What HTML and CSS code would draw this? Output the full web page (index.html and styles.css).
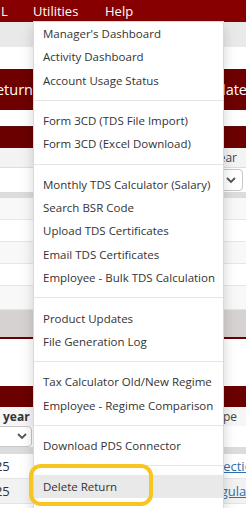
FILE: index.html
```html
<!DOCTYPE html>
<html>
<head>
<meta charset="utf-8">
<link rel="stylesheet" href="styles.css">
</head>
<body>
<div class="page">
  <nav class="topnav">
    <span class="nav-item nav-first">L</span>
    <span class="nav-item nav-util">Utilities</span>
    <span class="nav-item">Help</span>
  </nav>
  <div class="subbar"></div>
  <div class="blank blank-22"></div>
  <div class="banner">
    <span class="banner-left">Return</span>
    <span class="banner-right">Update</span>
  </div>
  <div class="blank blank-16 line-bottom"></div>
  <div class="panel-head"></div>
  <div class="label-row"><span class="label-right">Financial Year</span></div>
  <div class="select-row select-row-right">
    <div class="select select-right">
      <svg class="chev" width="10" height="7" viewBox="0 0 10 7"><polyline points="1,1 5,5 9,1" fill="none" stroke="#555" stroke-width="1.8"/></svg>
    </div>
  </div>
  <div class="band-grey"></div>
  <div class="row row-alt"></div>
  <div class="row"></div>
  <div class="row row-alt"></div>
  <div class="row"></div>
  <div class="row row-alt row-last"></div>
  <div class="band-dark-grey"></div>
  <div class="red-line"></div>
  <div class="blank blank-47"></div>
  <div class="panel-head panel-head-2"></div>
  <div class="head-row">
    <span class="head-left">year</span>
    <span class="head-right">Type</span>
  </div>
  <div class="select-row select-row-left">
    <div class="select select-left">
      <svg class="chev" width="10" height="7" viewBox="0 0 10 7"><polyline points="1,1 5,5 9,1" fill="none" stroke="#555" stroke-width="1.8"/></svg>
    </div>
  </div>
  <div class="band-grey band-grey-2"></div>
  <div class="data-row">
    <span class="cell-year">2024-25</span>
    <span class="cell-type"><a class="type-link">Correction</a></span>
  </div>
  <div class="data-row data-row-alt">
    <span class="cell-year">2024-25</span>
    <span class="cell-type"><a class="type-link">Regular</a></span>
  </div>
  <div class="data-row"></div>

  <ul class="dropdown">
    <li class="dd-item">Manager's Dashboard</li>
    <li class="dd-item">Activity Dashboard</li>
    <li class="dd-item">Account Usage Status</li>
    <li class="dd-divider"></li>
    <li class="dd-item">Form 3CD (TDS File Import)</li>
    <li class="dd-item">Form 3CD (Excel Download)</li>
    <li class="dd-divider"></li>
    <li class="dd-item">Monthly TDS Calculator (Salary)</li>
    <li class="dd-item">Search BSR Code</li>
    <li class="dd-item">Upload TDS Certificates</li>
    <li class="dd-item">Email TDS Certificates</li>
    <li class="dd-item">Employee - Bulk TDS Calculation</li>
    <li class="dd-divider"></li>
    <li class="dd-item">Product Updates</li>
    <li class="dd-item">File Generation Log</li>
    <li class="dd-divider"></li>
    <li class="dd-item">Tax Calculator Old/New Regime</li>
    <li class="dd-item">Employee - Regime Comparison</li>
    <li class="dd-divider"></li>
    <li class="dd-item">Download PDS Connector</li>
    <li class="dd-divider"></li>
    <li class="dd-item dd-hover">Delete Return</li>
  </ul>
  <div class="highlight-ring"></div>
</div>
</body>
</html>
```
FILE: styles.css
```css
* { box-sizing: border-box; }
html, body { margin: 0; padding: 0; }
body {
  width: 246px;
  height: 508px;
  overflow: hidden;
  background: #fff;
  font-family: "Open Sans", "Noto Sans", sans-serif;
  color: #333;
}
.page { position: relative; width: 246px; height: 508px; overflow: hidden; }

.topnav {
  height: 22px;
  background: #870000;
  display: flex;
  align-items: center;
  color: #fff;
  font-size: 13px;
  white-space: nowrap;
}
.nav-item { flex: none; line-height: 22px; }
.nav-first { width: 33px; padding-left: 1px; }
.nav-util { width: 72px; }

.subbar { height: 25px; background: #e9e9e9; }
.blank-22 { height: 22px; }
.blank-16 { height: 17px; }
.blank-47 { height: 47px; }
.line-bottom { border-bottom: 1px solid #5a1010; }

.banner {
  height: 41px;
  background: #6e0000;
  display: flex;
  justify-content: space-between;
  align-items: center;
  color: #fff;
  font-size: 14.5px;
  white-space: nowrap;
}
.banner-left { margin-left: -13px; }
.banner-right { margin-right: -1px; }

.panel-head { height: 21px; background: #6b0000; }
.panel-head-2 { height: 21px; }

.label-row {
  height: 20px;
  background: #f3f3f3;
  border-bottom: 1px solid #dedede;
  display: flex;
  justify-content: flex-end;
  align-items: center;
  font-size: 12px;
  color: #444;
  padding-right: 9px;
}
.select-row { height: 24px; display: flex; align-items: center; }
.select-row-right { justify-content: flex-end; padding-right: 3px; }
.select {
  height: 22px;
  border: 1px solid #c6c6c6;
  border-radius: 4px;
  background: #fff;
  display: flex;
  align-items: center;
  justify-content: flex-end;
}
.select-right { width: 60px; padding-right: 6px; }
.select-left { width: 40px; margin-left: -8px; padding-right: 4px; height: 21px; }
.chev { display: block; }

.band-grey { height: 6px; background: #dcdcdc; }
.band-grey-2 { height: 7px; }
.row { height: 22px; border-bottom: 1px solid #e6e6e6; background: #fff; }
.row-alt { background: #f8f8f8; }
.row-last { height: 24px; }
.band-dark-grey { height: 27px; background: #d6d2d2; }
.red-line { height: 2px; background: #6b0000; }

.head-row {
  height: 19px;
  background: #f6f6f6;
  display: flex;
  justify-content: space-between;
  align-items: center;
  font-size: 12px;
  padding: 0 9px 0 3px;
}
.head-left { font-weight: bold; color: #333; }
.head-right { color: #444; }
.select-row-left { height: 21px; background: #fff; }

.data-row {
  height: 25px;
  border-bottom: 1px solid #e4e4e4;
  display: flex;
  justify-content: space-between;
  align-items: center;
  font-size: 13px;
  white-space: nowrap;
}
.data-row-alt { background: #f2f2f2; }
.cell-year { margin-left: -39px; color: #333; }
.cell-type { width: 60px; margin-right: -12.5px; display: flex; justify-content: center; }
.type-link { color: #2f6fae; text-decoration: underline; }

.dropdown {
  position: absolute;
  left: 33px;
  top: 21px;
  width: 191px;
  margin: 0;
  padding: 0 0 20px;
  list-style: none;
  background: #fff;
  border: 1px solid rgba(0, 0, 0, 0.15);
  box-shadow: 0 6px 12px rgba(0, 0, 0, 0.17);
  font-size: 11.5px;
  color: #333;
}
.dd-item {
  height: 23.3px;
  line-height: 23.3px;
  padding-left: 9px;
  white-space: nowrap;
}
.dd-divider { height: 1px; margin: 8.1px 0; background: #e5e5e5; }
.dd-hover { background: #e9e9e9; }

.highlight-ring {
  position: absolute;
  left: 29px;
  top: 464px;
  width: 124px;
  height: 42px;
  border: 4px solid #f7c521;
  border-radius: 12px;
}
```
